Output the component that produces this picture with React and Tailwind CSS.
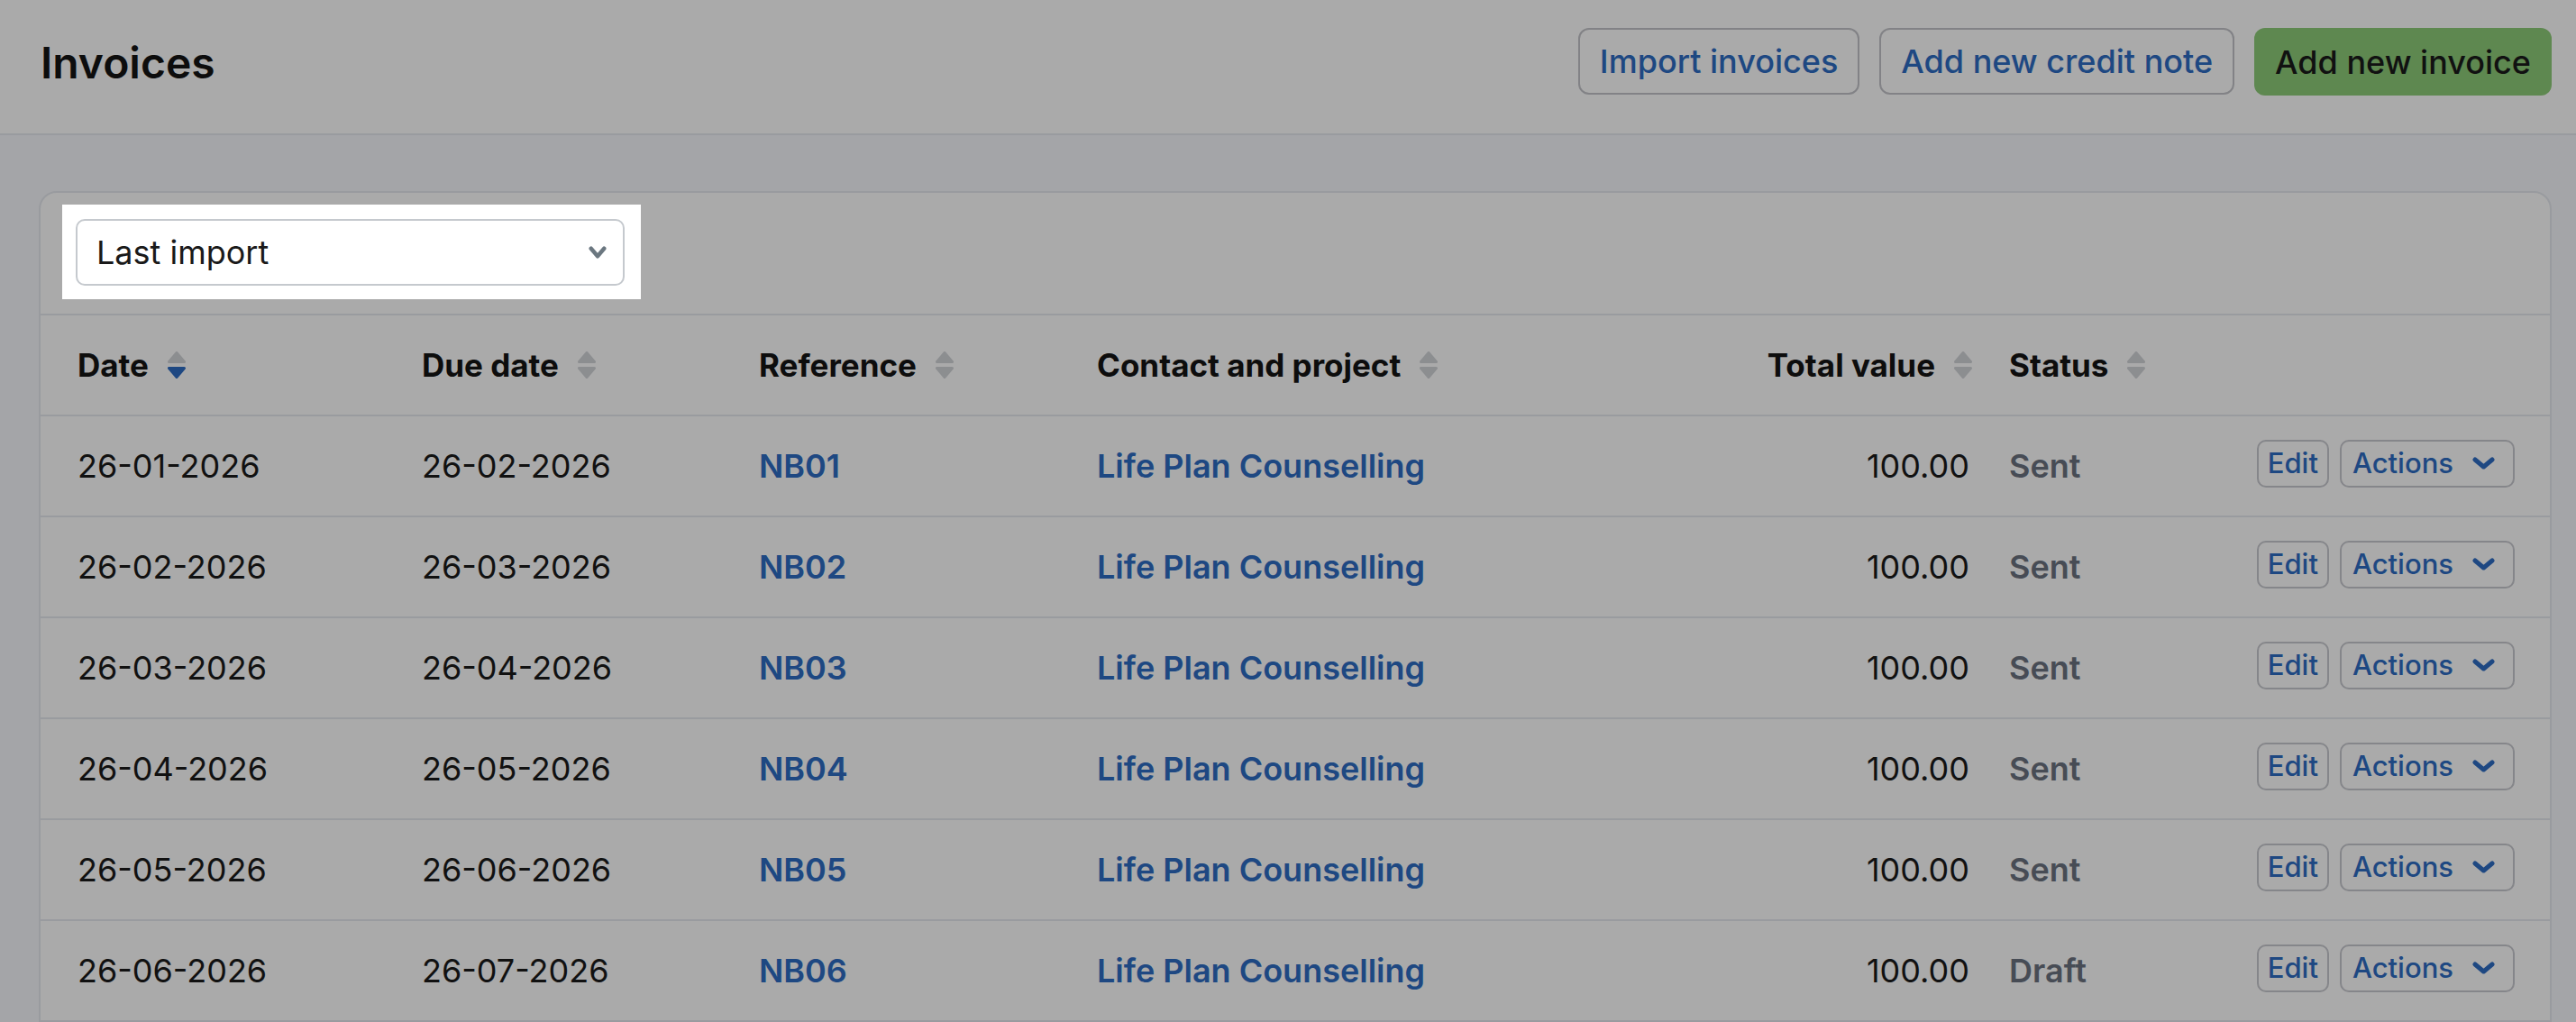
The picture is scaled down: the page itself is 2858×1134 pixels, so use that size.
import { useState } from 'react';

const invoices = [
  { date: '26-01-2026', due: '26-02-2026', ref: 'NB01', status: 'Sent' },
  { date: '26-02-2026', due: '26-03-2026', ref: 'NB02', status: 'Sent' },
  { date: '26-03-2026', due: '26-04-2026', ref: 'NB03', status: 'Sent' },
  { date: '26-04-2026', due: '26-05-2026', ref: 'NB04', status: 'Sent' },
  { date: '26-05-2026', due: '26-06-2026', ref: 'NB05', status: 'Sent' },
  { date: '26-06-2026', due: '26-07-2026', ref: 'NB06', status: 'Draft' },
];

const rowGrid =
  'grid grid-cols-[382px_374px_375px_1fr_250px_302px_300px] items-center h-[112px] pl-[41px] pr-[39px] border-b-2 border-[#e6e9ef]';

function SortIcon({ active }) {
  const grey = '#d3d5d9';
  const down = active ? '#2e6cc4' : grey;
  return (
    <svg width="20" height="30" viewBox="0 0 20 30" className="shrink-0">
      <path d="M10 1.5 L18.5 11.5 H1.5 Z" fill={grey} stroke={grey} strokeWidth="3" strokeLinejoin="round" />
      <path d="M1.5 18.5 H18.5 L10 28.5 Z" fill={down} stroke={down} strokeWidth="3" strokeLinejoin="round" />
    </svg>
  );
}

function Chevron({ w = 25, h = 14, color, stroke = 5 }) {
  return (
    <svg width={w} height={h} viewBox={`0 0 ${w} ${h}`} className="shrink-0">
      <polyline
        points={`${stroke / 2 + 0.5},${stroke / 2 + 0.5} ${w / 2},${h - stroke / 2 - 0.5} ${w - stroke / 2 - 0.5},${stroke / 2 + 0.5}`}
        fill="none"
        stroke={color}
        strokeWidth={stroke}
        strokeLinecap="round"
        strokeLinejoin="round"
      />
    </svg>
  );
}

function HeadCell({ label, active, right }) {
  return (
    <div className={`flex items-center gap-[21px] ${right ? 'justify-end' : ''}`}>
      <span className="text-[35px] font-bold text-[#141414]">{label}</span>
      <SortIcon active={active} />
    </div>
  );
}

function InvoiceRow({ inv }) {
  return (
    <div className={rowGrid}>
      <div className="text-[36px] text-[#1a1a1a]">{inv.date}</div>
      <div className="text-[36px] text-[#1a1a1a]">{inv.due}</div>
      <a className="text-[36px] font-semibold text-[#2e6cc4]">{inv.ref}</a>
      <a className="text-[36px] font-semibold text-[#2e6cc4]">Life Plan Counselling</a>
      <div className="text-right text-[36px] text-[#1a1a1a] pr-[3px]">100.00</div>
      <div className="pl-[41px] text-[36px] font-semibold text-[#6b7280]">{inv.status}</div>
      <div className="flex justify-end gap-[12px] -mt-[6px]">
        <button className="h-[53px] px-[10px] border-2 border-[#c8c9cf] rounded-[10px] text-[31px] font-medium text-[#2e6cc4]">
          Edit
        </button>
        <button className="h-[53px] pl-[12px] pr-[20px] border-2 border-[#c8c9cf] rounded-[10px] flex items-center gap-[21px] text-[31px] font-medium text-[#2e6cc4]">
          Actions
          <Chevron color="#2e6cc4" />
        </button>
      </div>
    </div>
  );
}

export default function App() {
  const [filter] = useState('Last import');

  return (
    <div className="min-h-screen bg-[#f7f8fc] font-['Inter',sans-serif]">
      <header className="h-[150px] bg-white border-b-2 border-[#e6e9ef] flex justify-between items-start pl-[45px] pr-[27px] pt-[31px]">
        <div className="h-[74px] flex items-center">
          <h1 className="text-[48px] font-semibold text-[#141414] mt-[3px]">Invoices</h1>
        </div>
        <div className="flex gap-[22px]">
          <button className="h-[74px] px-[22px] border-2 border-[#c3c4c9] rounded-[12px] text-[36px] font-medium text-[#2e6cc4]">
            Import invoices
          </button>
          <button className="h-[74px] px-[22px] border-2 border-[#c3c4c9] rounded-[12px] text-[36px] font-medium text-[#2e6cc4]">
            Add new credit note
          </button>
          <button className="h-[75px] px-[23px] rounded-[12px] bg-[#8dcc78] text-[36px] font-medium text-[#1a1a1a]">
            Add new invoice
          </button>
        </div>
      </header>

      <main className="pt-[62px] pl-[43px] pr-[27px]">
        <section className="bg-white border-2 border-[#e6e9ef] rounded-[20px] pb-[40px]">
          <div className="px-[39px] pt-[29px] pb-[31px] border-b-2 border-[#e6e9ef]">
            <div className="relative w-[609px]">
              {/* tour spotlight around the filter */}
              <div className="absolute -left-[15px] -right-[18px] -top-[16px] -bottom-[15px] bg-white z-10 shadow-[0_0_0_9999px_rgba(0,0,0,0.333)]" />
              <div className="relative z-20 h-[74px] border-2 border-[#c5c9ce] rounded-[10px] bg-white flex items-center justify-between pl-[21px] pr-[18px]">
                <span className="text-[36px] text-[#1a1a1a]">{filter}</span>
                <Chevron w={20} h={14} stroke={4.5} color="#6b7780" />
              </div>
            </div>
          </div>

          <div className={rowGrid}>
            <HeadCell label="Date" active />
            <HeadCell label="Due date" />
            <HeadCell label="Reference" />
            <HeadCell label="Contact and project" />
            <HeadCell label="Total value" right />
            <div className="pl-[41px]">
              <HeadCell label="Status" />
            </div>
            <div />
          </div>

          {invoices.map((inv) => (
            <InvoiceRow key={inv.ref} inv={inv} />
          ))}
        </section>
      </main>
    </div>
  );
}
